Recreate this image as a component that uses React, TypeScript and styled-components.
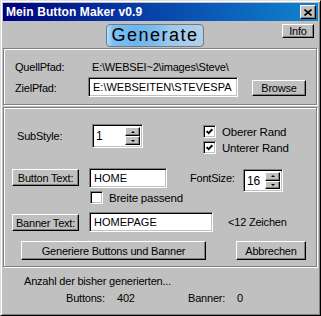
import React from 'react';
import styled, { createGlobalStyle } from 'styled-components';

const Global = createGlobalStyle`
  html, body { margin: 0; padding: 0; background: #c0c0c0; }
  body { font-family: "Liberation Sans", Arial, sans-serif; font-size: 11px; color: #000; }
  * { box-sizing: border-box; }
`;

const Window = styled.div`
  width: 321px;
  height: 316px;
  background: #c0c0c0;
  border-top: 1px solid #dfdfdf;
  border-left: 1px solid #dfdfdf;
  border-right: 1px solid #000;
  border-bottom: 1px solid #000;
  box-shadow: inset 1px 1px 0 #fff, inset -1px -1px 0 #808080;
  padding: 2px;
  display: flex;
  flex-direction: column;
  letter-spacing: -0.2px;
`;

const TitleBar = styled.div`
  height: 18px;
  flex: none;
  display: flex;
  align-items: center;
  justify-content: space-between;
  padding: 0 2px 0 3px;
  background: linear-gradient(to right, #00007c 0%, #0634a0 35%, #1084d0 100%);
`;

const TitleText = styled.span`
  color: #fff;
  font-weight: bold;
  font-size: 12px;
  letter-spacing: 0.1px;
`;

const raised = `
  background: #c0c0c0;
  border-top: 1px solid #fff;
  border-left: 1px solid #fff;
  border-right: 1px solid #000;
  border-bottom: 1px solid #000;
  box-shadow: inset -1px -1px 0 #808080;
`;

const CloseBtn = styled.div`
  ${raised}
  width: 16px;
  height: 14px;
  display: flex;
  align-items: center;
  justify-content: center;
`;

const TopRow = styled.div`
  height: 27px;
  flex: none;
  display: flex;
  align-items: flex-start;
`;

const GenerateBtn = styled.div`
  margin: 3px 0 0 103px;
  width: 98px;
  height: 23px;
  border: 1px solid #6a7c8c;
  border-radius: 4px;
  background: linear-gradient(to right, #b8e0fc 0%, #7cc0f2 6%, #6cb6ee 30%, #7cbcec 50%, #98c8ec 64%, #a8cce8 80%, #b4d0e6 100%);
  display: flex;
  align-items: center;
  justify-content: center;
  font-size: 18px;
  letter-spacing: 1.5px;
  color: #000;
`;

const Btn = styled.div<{ w: number; h: number; ml?: number; mt?: number }>`
  ${raised}
  width: ${p => p.w}px;
  height: ${p => p.h}px;
  margin-left: ${p => p.ml ?? 0}px;
  margin-top: ${p => p.mt ?? 0}px;
  display: flex;
  align-items: center;
  justify-content: center;
  flex: none;
`;

const InfoBtn = styled(Btn)`
  margin-left: auto;
  margin-right: 4px;
`;

const Group = styled.div<{ h: number; mb?: number }>`
  width: 314px;
  height: ${p => p.h}px;
  margin-bottom: ${p => p.mb ?? 0}px;
  flex: none;
  border: 1px solid #808080;
  box-shadow: inset 1px 1px 0 #fff, 1px 1px 0 #fff;
  display: flex;
  flex-direction: column;
`;

const Row = styled.div<{ mt: number; pl: number; h: number }>`
  display: flex;
  align-items: flex-start;
  margin-top: ${p => p.mt}px;
  padding-left: ${p => p.pl}px;
  height: ${p => p.h}px;
  flex: none;
`;

const Label = styled.span<{ w?: number; lh: number; ml?: number; mt?: number }>`
  display: inline-block;
  width: ${p => (p.w ? `${p.w}px` : 'auto')};
  line-height: ${p => p.lh}px;
  margin-left: ${p => p.ml ?? 0}px;
  margin-top: ${p => p.mt ?? 0}px;
  white-space: nowrap;
  flex: none;
`;

const sunken = `
  background: #fff;
  border-top: 1px solid #808080;
  border-left: 1px solid #808080;
  border-right: 1px solid #fff;
  border-bottom: 1px solid #fff;
  box-shadow: inset 1px 1px 0 #000, inset -1px -1px 0 #c0c0c0;
`;

const Field = styled.input<{ w: number; h: number; ml?: number; mt?: number }>`
  ${sunken}
  width: ${p => p.w}px;
  height: ${p => p.h}px;
  margin: ${p => p.mt ?? 0}px 0 0 ${p => p.ml ?? 0}px;
  padding: 0 0 0 4px;
  font: inherit;
  font-size: 11px;
  letter-spacing: 0;
  color: #000;
  outline: none;
  flex: none;
`;

const SpinBox = styled.div<{ w: number; h: number; ml?: number; mt?: number }>`
  ${sunken}
  width: ${p => p.w}px;
  height: ${p => p.h}px;
  margin: ${p => p.mt ?? 0}px 0 0 ${p => p.ml ?? 0}px;
  display: flex;
  align-items: stretch;
  padding: 2px 2px 2px 0;
  flex: none;
`;

const SpinValue = styled.span`
  flex: 1;
  padding-left: 3px;
  display: flex;
  align-items: center;
  font-size: 12px;
`;

const SpinButtons = styled.div`
  width: 15px;
  display: flex;
  flex-direction: column;
`;

const SpinBtn = styled.div<{ down?: boolean }>`
  ${raised}
  flex: 1;
  display: flex;
  align-items: center;
  justify-content: center;
  &::after {
    content: '';
    width: 0;
    height: 0;
    border-left: 2px solid transparent;
    border-right: 2px solid transparent;
    ${p => (p.down ? 'border-top: 2px solid #000;' : 'border-bottom: 2px solid #000;')}
  }
`;

const CheckList = styled.div<{ ml: number }>`
  display: flex;
  flex-direction: column;
  gap: 3px;
  margin: 1px 0 0 ${p => p.ml}px;
`;

const CheckItem = styled.div`
  display: flex;
  align-items: center;
  height: 13px;
`;

const CheckBox = styled.div`
  ${sunken}
  width: 13px;
  height: 13px;
  flex: none;
  display: flex;
  align-items: center;
  justify-content: center;
`;

const CheckLabel = styled.span`
  margin-left: 6px;
  white-space: nowrap;
  font-size: 11.5px;
`;

const Status = styled.div`
  flex: 1;
  padding: 7px 0 0 21px;
  display: flex;
  flex-direction: column;
`;

const StatusLine = styled.div<{ mt?: number; pl?: number }>`
  display: flex;
  line-height: 14px;
  margin-top: ${p => p.mt ?? 0}px;
  padding-left: ${p => p.pl ?? 0}px;
`;

const Check = () => (
  <svg width="7" height="7" viewBox="0 0 7 7">
    <polyline points="0.6,3 2.6,5.2 6.4,1.2" fill="none" stroke="#000" strokeWidth="1.8" />
  </svg>
);

export default function App() {
  return (
    <>
      <Global />
      <Window>
        <TitleBar>
          <TitleText>Mein Button Maker v0.9</TitleText>
          <CloseBtn>
            <svg width="8" height="7" viewBox="0 0 8 7">
              <path d="M0.5 0.5 L7.5 6.5 M7.5 0.5 L0.5 6.5" stroke="#000" strokeWidth="1.6" />
            </svg>
          </CloseBtn>
        </TitleBar>

        <TopRow>
          <GenerateBtn>Generate</GenerateBtn>
          <InfoBtn w={32} h={14} mt={3}>Info</InfoBtn>
        </TopRow>

        <Group h={57} mb={2}>
          <Row mt={11} pl={11} h={14}>
            <Label w={77} lh={14}>QuellPfad:</Label>
            <Label lh={14}>E:\WEBSEI~2\images\Steve\</Label>
          </Row>
          <Row mt={3} pl={11} h={20}>
            <Label w={73} lh={20} mt={1}>ZielPfad:</Label>
            <Field w={150} h={20} readOnly defaultValue="E:\WEBSEITEN\STEVESPA" />
            <Btn w={54} h={16} ml={14} mt={3}>Browse</Btn>
          </Row>
        </Group>

        <Group h={160}>
          <Row mt={16} pl={13} h={30}>
            <Label w={75} lh={24}>SubStyle:</Label>
            <SpinBox w={51} h={24}>
              <SpinValue>1</SpinValue>
              <SpinButtons>
                <SpinBtn />
                <SpinBtn down />
              </SpinButtons>
            </SpinBox>
            <CheckList ml={60}>
              <CheckItem>
                <CheckBox><Check /></CheckBox>
                <CheckLabel>Oberer Rand</CheckLabel>
              </CheckItem>
              <CheckItem>
                <CheckBox><Check /></CheckBox>
                <CheckLabel>Unterer Rand</CheckLabel>
              </CheckItem>
            </CheckList>
          </Row>

          <Row mt={14} pl={8} h={23}>
            <Btn w={67} h={17} mt={1}>Button Text:</Btn>
            <Field w={78} h={20} ml={10} readOnly defaultValue="HOME" />
            <Label w={53} lh={20} ml={23}>FontSize:</Label>
            <SpinBox w={40} h={23} mt={1}>
              <SpinValue>16</SpinValue>
              <SpinButtons>
                <SpinBtn />
                <SpinBtn down />
              </SpinButtons>
            </SpinBox>
          </Row>

          <Row mt={0} pl={86} h={13}>
            <CheckItem>
              <CheckBox />
              <CheckLabel>Breite passend</CheckLabel>
            </CheckItem>
          </Row>

          <Row mt={8} pl={8} h={20}>
            <Btn w={67} h={17} mt={2}>Banner Text:</Btn>
            <Field w={124} h={20} ml={10} readOnly defaultValue="HOMEPAGE" />
            <Label lh={20} ml={15}>&lt;12 Zeichen</Label>
          </Row>

          <Row mt={9} pl={17} h={19}>
            <Btn w={185} h={19}>Generiere Buttons und Banner</Btn>
            <Btn w={70} h={19} ml={30}>Abbrechen</Btn>
          </Row>
        </Group>

        <Status>
          <StatusLine>Anzahl der bisher generierten...</StatusLine>
          <StatusLine mt={3} pl={42}>
            <Label w={51} lh={14}>Buttons:</Label>
            <Label w={71} lh={14}>402</Label>
            <Label w={49} lh={14}>Banner:</Label>
            <Label lh={14}>0</Label>
          </StatusLine>
        </Status>
      </Window>
    </>
  );
}
